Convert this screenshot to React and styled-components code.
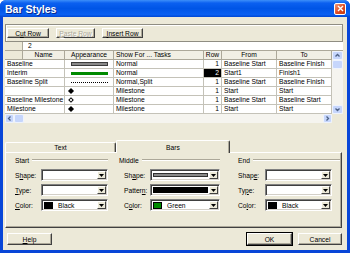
import React from "react";
import styled, { createGlobalStyle } from "styled-components";

const GlobalStyle = createGlobalStyle`
  html, body { margin: 0; padding: 0; }
  body {
    width: 350px;
    height: 253px;
    overflow: hidden;
    font-family: "Liberation Sans", Arial, sans-serif;
  }
`;

const Window = styled.div`
  width: 350px;
  height: 253px;
  box-sizing: border-box;
  display: flex;
  flex-direction: column;
  background: #0846d8;
  border-radius: 6px 6px 0 0;
  font-size: 6.7px;
  color: #000;
`;

const TitleBar = styled.div`
  height: 17px;
  flex: none;
  display: flex;
  align-items: center;
  justify-content: space-between;
  padding: 0 4px 0 5px;
  background: linear-gradient(#3d8ff9 0%, #0b60f0 18%, #0055e6 50%, #0a60f2 85%, #0047d3 100%);
  border-radius: 6px 6px 0 0;
`;

const Title = styled.span`
  color: #fff;
  font-weight: bold;
  font-size: 10.5px;
  text-shadow: 1px 1px 0 #0a2a8a;
`;

const CloseBtn = styled.div`
  width: 12px;
  height: 12px;
  box-sizing: border-box;
  border: 1px solid #fff;
  border-radius: 2px;
  background: linear-gradient(135deg, #f39a78, #de4b22 55%, #c23a12);
  display: flex;
  align-items: center;
  justify-content: center;
`;

const Client = styled.div`
  flex: 1;
  min-height: 0;
  margin: 0 3px 3px;
  background: #ece9d8;
  display: flex;
  flex-direction: column;
  padding: 7px 4px 0 2px;
`;

const Toolbar = styled.div`
  height: 18px;
  flex: none;
  box-sizing: border-box;
  display: flex;
  align-items: center;
  gap: 7px;
  padding-left: 1px;
  border: 1px solid #8f8d82;
  box-shadow: inset 1px 1px 0 #fff;
`;

const Button = styled.div`
  width: ${(p) => p.w}px;
  height: ${(p) => p.h || 10}px;
  margin-right: ${(p) => p.mr || 0}px;
  box-sizing: border-box;
  flex: none;
  display: flex;
  align-items: center;
  justify-content: center;
  background: #ece9d8;
  border-top: 1px solid #fff;
  border-left: 1px solid #fff;
  border-right: 1px solid #404040;
  border-bottom: 1px solid #404040;
  box-shadow: inset -1px -1px 0 #aca899;
  color: ${(p) => (p.disabled ? "#aca899" : "#000")};
  text-shadow: ${(p) => (p.disabled ? "1px 1px 0 #fff" : "none")};
  ${(p) => p.isDefault && "outline: 1px solid #000;"}
`;

const GridFrame = styled.div`
  flex: none;
  display: flex;
  flex-direction: column;
  background: #fff;
`;

const EditRow = styled.div`
  height: 9px;
  display: flex;
`;

const Corner = styled.div`
  width: ${(p) => p.w}px;
  flex: none;
  box-sizing: border-box;
  background: #ece9d8;
  border-right: 1px solid #aca899;
  border-bottom: 1px solid #aca899;
`;

const EditCell = styled.div`
  flex: 1;
  box-sizing: border-box;
  padding-left: 5px;
  line-height: 8px;
  border-bottom: 1px solid #aca899;
`;

const Body = styled.div`
  display: flex;
`;

const TableArea = styled.div`
  flex: 1;
  display: flex;
  flex-direction: column;
`;

const HeadRow = styled.div`
  display: grid;
  grid-template-columns: 18px 42px 49px 90px 18px 55px 55px;
  height: 9px;
`;

const HeadCell = styled.div`
  box-sizing: border-box;
  background: #f1efe4;
  border-right: 1px solid #aca899;
  border-bottom: 1px solid #aca899;
  line-height: 8px;
  text-align: ${(p) => (p.left ? "left" : "center")};
  padding-left: ${(p) => (p.left ? 2 : 0)}px;
  white-space: nowrap;
  overflow: hidden;
`;

const DataRow = styled.div`
  display: grid;
  grid-template-columns: 60px 49px 90px 18px 55px 55px;
  height: 9px;
`;

const Cell = styled.div`
  box-sizing: border-box;
  border-right: 1px solid #c4c2b8;
  border-bottom: 1px solid #c4c2b8;
  line-height: 8px;
  padding: 0 2px;
  white-space: nowrap;
  overflow: hidden;
  display: flex;
  align-items: center;
  justify-content: ${(p) => (p.right ? "flex-end" : "flex-start")};
  background: ${(p) => (p.selected ? "#000" : "#fff")};
  color: ${(p) => (p.selected ? "#fff" : "#000")};
`;

const BarLine = styled.div`
  width: 37px;
  margin-left: 4px;
  box-sizing: border-box;
  height: ${(p) => (p.kind === "gray" ? 4 : p.kind === "green" ? 3 : 1)}px;
  background: ${(p) =>
    p.kind === "gray" ? "#8a8a8a" : p.kind === "green" ? "#008a00" : "transparent"};
  border: ${(p) => (p.kind === "gray" ? "1px solid #3c3c3c" : "none")};
  border-top: ${(p) => (p.kind === "dots" ? "1px dotted #000" : undefined)};
`;

const Diamond = styled.div`
  width: 4px;
  height: 4px;
  margin-left: 2px;
  box-sizing: border-box;
  transform: rotate(45deg);
  background: ${(p) => (p.open ? "#fff" : "#000")};
  border: 1px solid #000;
`;

const VScroll = styled.div`
  width: 11px;
  flex: none;
  display: flex;
  flex-direction: column;
  background: #f5f4ef;
`;

const ScrollBtn = styled.div`
  width: ${(p) => p.w || 11}px;
  height: ${(p) => p.h || 9}px;
  flex: none;
  box-sizing: border-box;
  background: #c6d6fc;
  border: 1px solid #eef3fe;
  border-radius: 2px;
  display: flex;
  align-items: center;
  justify-content: center;
`;

const Spacer = styled.div`
  flex: 1;
`;

const HScrollRow = styled.div`
  height: 9px;
  display: flex;
`;

const HScroll = styled.div`
  flex: 1;
  display: flex;
  background: #f5f4ef;
`;

const ScrollCorner = styled.div`
  width: 11px;
  background: #ece9d8;
`;

const TabRow = styled.div`
  margin-top: 17px;
  height: 12px;
  flex: none;
  display: flex;
  align-items: flex-end;
`;

const Tab = styled.div`
  width: ${(p) => p.w}px;
  height: ${(p) => (p.active ? 13 : 10)}px;
  box-sizing: border-box;
  display: flex;
  align-items: center;
  justify-content: center;
  background: #ece9d8;
  border-top: 1px solid #fff;
  border-left: 1px solid #fff;
  border-right: 1px solid #404040;
  box-shadow: inset -1px 0 0 #aca899;
  border-radius: 2px 2px 0 0;
  position: relative;
  z-index: ${(p) => (p.active ? 1 : 0)};
  margin-bottom: ${(p) => (p.active ? -1 : 0)}px;
`;

const Panel = styled.div`
  height: 76px;
  flex: none;
  box-sizing: border-box;
  margin-right: 1px;
  border-top: 1px solid #fff;
  border-left: 1px solid #fff;
  border-right: 1px solid #404040;
  border-bottom: 1px solid #404040;
  box-shadow: inset -1px -1px 0 #aca899;
  padding: 2px 9px 0 9px;
  display: flex;
`;

const Group = styled.div`
  width: ${(p) => p.w}px;
  margin-right: ${(p) => p.gap || 0}px;
  flex: none;
  display: flex;
  flex-direction: column;
  gap: 3px;
`;

const GroupHead = styled.div`
  height: 10px;
  display: flex;
  align-items: center;
  gap: 3px;
  margin-right: ${(p) => p.extend || 0}px;
  margin-bottom: 1px;
`;

const Etched = styled.div`
  flex: 1;
  border-top: 1px solid #aca899;
  border-bottom: 1px solid #fff;
`;

const FieldRow = styled.div`
  height: 12px;
  display: flex;
  align-items: center;
  padding-left: ${(p) => p.indent || 0}px;
`;

const Label = styled.span`
  width: ${(p) => p.w}px;
  flex: none;
`;

const Combo = styled.div`
  flex: 1;
  height: 12px;
  box-sizing: border-box;
  display: flex;
  background: #fff;
  border-top: 1px solid #808080;
  border-left: 1px solid #808080;
  border-right: 1px solid #fff;
  border-bottom: 1px solid #fff;
  box-shadow: inset 1px 1px 0 #404040, inset -1px -1px 0 #d4d0c8;
  padding: 1px;
`;

const ComboValue = styled.div`
  flex: 1;
  display: flex;
  align-items: center;
  gap: 5px;
  padding: 1px;
  min-width: 0;
`;

const DropBtn = styled.div`
  width: 9px;
  flex: none;
  box-sizing: border-box;
  background: #ece9d8;
  border-top: 1px solid #fff;
  border-left: 1px solid #fff;
  border-right: 1px solid #404040;
  border-bottom: 1px solid #404040;
  display: flex;
  align-items: center;
  justify-content: center;
`;

const Swatch = styled.div`
  width: 9px;
  height: 7px;
  flex: none;
  background: ${(p) => p.color};
  border: 1px solid #000;
  box-sizing: border-box;
`;

const Fill = styled.div`
  flex: 1;
  align-self: stretch;
  box-sizing: border-box;
  background: ${(p) => p.color};
  border: ${(p) => (p.outline ? "1px solid #303030" : "none")};
  margin: ${(p) => (p.outline ? "1px 0" : "0")};
`;

const Footer = styled.div`
  margin-top: 5px;
  height: 12px;
  flex: none;
  display: flex;
  padding: 0 1px 0 2px;
`;

const Arrow = ({ dir }) => {
  const paths = {
    up: "M1.5 4.5 L3.5 2.5 L5.5 4.5",
    down: "M1.5 2.5 L3.5 4.5 L5.5 2.5",
    left: "M4.5 1.5 L2.5 3.5 L4.5 5.5",
    right: "M2.5 1.5 L4.5 3.5 L2.5 5.5",
  };
  return (
    <svg width="7" height="7" viewBox="0 0 7 7">
      <path d={paths[dir]} fill="none" stroke="#4d6185" strokeWidth="1.3" />
    </svg>
  );
};

const DownTri = () => (
  <svg width="5" height="3" viewBox="0 0 5 3">
    <path d="M0 0 H5 L2.5 3 Z" fill="#000" />
  </svg>
);

const rows = [
  { name: "Baseline", look: <BarLine kind="gray" />, show: "Normal", row: 1, from: "Baseline Start", to: "Baseline Finish" },
  { name: "Interim", look: <BarLine kind="green" />, show: "Normal", row: 2, from: "Start1", to: "Finish1", selected: true },
  { name: "Baseline Split", look: <BarLine kind="dots" />, show: "Normal,Split", row: 1, from: "Baseline Start", to: "Baseline Finish" },
  { name: "", look: <Diamond />, show: "Milestone", row: 1, from: "Start", to: "Start" },
  { name: "Baseline Milestone", look: <Diamond open />, show: "Milestone", row: 1, from: "Baseline Start", to: "Baseline Start" },
  { name: "Milestone", look: <Diamond />, show: "Milestone", row: 1, from: "Start", to: "Start" },
];

const Field = ({ label, lw, indent, children }) => (
  <FieldRow indent={indent}>
    <Label w={lw}>{label}</Label>
    <Combo>
      <ComboValue>{children}</ComboValue>
      <DropBtn>
        <DownTri />
      </DropBtn>
    </Combo>
  </FieldRow>
);

const App = () => (
  <>
    <GlobalStyle />
    <Window>
      <TitleBar>
        <Title>Bar Styles</Title>
        <CloseBtn>
          <svg width="7" height="7" viewBox="0 0 7 7">
            <path d="M1 1 L6 6 M6 1 L1 6" stroke="#fff" strokeWidth="1.4" />
          </svg>
        </CloseBtn>
      </TitleBar>
      <Client>
        <Toolbar>
          <Button w={42}>
            <span>C<u>u</u>t Row</span>
          </Button>
          <Button w={39} disabled>
            <span><u>P</u>aste Row</span>
          </Button>
          <Button w={41}>
            <span><u>I</u>nsert Row</span>
          </Button>
        </Toolbar>

        <GridFrame>
          <EditRow>
            <Corner w={18} />
            <EditCell>2</EditCell>
          </EditRow>
          <Body>
            <TableArea>
              <HeadRow>
                <Corner w={18} />
                <HeadCell>Name</HeadCell>
                <HeadCell>Appearance</HeadCell>
                <HeadCell left>Show For ... Tasks</HeadCell>
                <HeadCell>Row</HeadCell>
                <HeadCell>From</HeadCell>
                <HeadCell>To</HeadCell>
              </HeadRow>
              {rows.map((r, i) => (
                <DataRow key={i}>
                  <Cell>{r.name}</Cell>
                  <Cell>{r.look}</Cell>
                  <Cell>{r.show}</Cell>
                  <Cell right selected={r.selected}>{r.row}</Cell>
                  <Cell>{r.from}</Cell>
                  <Cell>{r.to}</Cell>
                </DataRow>
              ))}
            </TableArea>
            <VScroll>
              <ScrollBtn>
                <Arrow dir="up" />
              </ScrollBtn>
              <ScrollBtn />
              <Spacer />
              <ScrollBtn>
                <Arrow dir="down" />
              </ScrollBtn>
            </VScroll>
          </Body>
          <HScrollRow>
            <HScroll>
              <ScrollBtn w={9}>
                <Arrow dir="left" />
              </ScrollBtn>
              <ScrollBtn w={10} />
              <Spacer />
              <ScrollBtn w={9}>
                <Arrow dir="right" />
              </ScrollBtn>
            </HScroll>
            <ScrollCorner />
          </HScrollRow>
        </GridFrame>

        <TabRow>
          <Tab w={111}>Text</Tab>
          <Tab w={114} active>Bars</Tab>
        </TabRow>
        <Panel>
          <Group w={93} gap={11}>
            <GroupHead>
              <span>Start</span>
              <Etched />
            </GroupHead>
            <Field lw={26} label={<span>S<u>h</u>ape:</span>} />
            <Field lw={26} label={<span><u>T</u>ype:</span>} />
            <Field lw={26} label={<span><u>C</u>olor:</span>}>
              <Swatch color="#000" />
              <span>Black</span>
            </Field>
          </Group>
          <Group w={101} gap={18}>
            <GroupHead>
              <span>Middle</span>
              <Etched />
            </GroupHead>
            <Field lw={26} indent={5} label={<span>Sh<u>a</u>pe:</span>}>
              <Fill color="#8a8a8a" outline />
            </Field>
            <Field lw={26} indent={5} label={<span>Patter<u>n</u>:</span>}>
              <Fill color="#000" />
            </Field>
            <Field lw={26} indent={5} label={<span>C<u>o</u>lor:</span>}>
              <Swatch color="#008a00" />
              <span>Green</span>
            </Field>
          </Group>
          <Group w={94}>
            <GroupHead extend={-8}>
              <span>End</span>
              <Etched />
            </GroupHead>
            <Field lw={27} label={<span>Shap<u>e</u>:</span>} />
            <Field lw={27} label={<span>Ty<u>p</u>e:</span>} />
            <Field lw={27} label={<span>Co<u>l</u>or:</span>}>
              <Swatch color="#000" />
              <span>Black</span>
            </Field>
          </Group>
        </Panel>

        <Footer>
          <Button w={45} h={12}>
            <span><u>H</u>elp</span>
          </Button>
          <Spacer />
          <Button w={45} h={12} mr={6} isDefault>
            OK
          </Button>
          <Button w={44} h={12}>
            Cancel
          </Button>
        </Footer>
      </Client>
    </Window>
  </>
);

export default App;
